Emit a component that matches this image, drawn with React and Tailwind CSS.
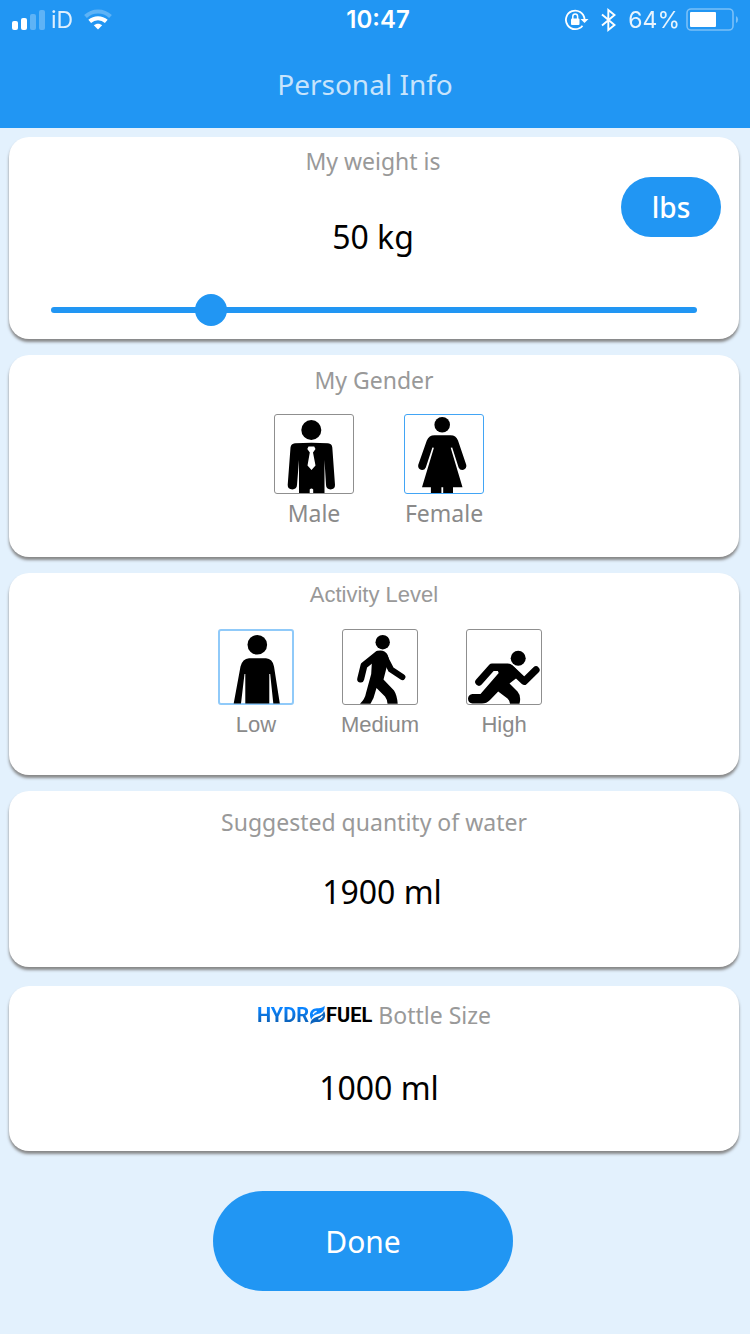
import { useState } from 'react';

function StatusBar() {
  return (
    <div className="grid h-10 grid-cols-3 items-center pr-[10px] pl-3 font-[Inter,sans-serif] text-[23px] leading-7 text-white">
      <div className="flex items-center gap-[6px]">
        <svg width="33" height="20" viewBox="0 0 33 20" fill="currentColor" aria-hidden="true">
          <rect x="0" y="11" width="6" height="9" rx="2" />
          <rect x="9" y="8" width="6" height="12" rx="2" />
          <rect x="18" y="4" width="6" height="16" rx="2" opacity=".28" />
          <rect x="27" y="0" width="6" height="20" rx="2" opacity=".28" />
        </svg>
        <span className="opacity-85">iD</span>
        <svg className="ml-1" width="30" height="22" viewBox="0 0 30 22" fill="none" stroke="currentColor" aria-hidden="true">
          <path d="M2.500 7.500 C9.500 .8 20.500 .8 27.500 7.500" strokeWidth="4" opacity=".28" />
          <path d="M6.700 12.300 C11.500 8.200 18.500 8.200 23.300 12.300" strokeWidth="4.200" />
          <path d="M15 20.500 L10.800 16.300 C13 14.200 17 14.200 19.200 16.300Z" fill="currentColor" stroke="none" />
        </svg>
      </div>
      <div className="pl-1 text-center text-2xl leading-7 font-semibold">10:47</div>
      <div className="flex items-center justify-end">
        <svg className="mr-3" width="24" height="22" viewBox="0 0 24 22" fill="none" stroke="currentColor" aria-hidden="true">
          <path d="M17.500 16.700 A9.300 9.300 0 1 1 19.500 10" strokeWidth="1.800" />
          <path d="M15.500 10 H23.500 L19.500 14Z" fill="currentColor" stroke="none" />
          <rect x="6" y="9.500" width="8.500" height="6.500" rx="1" fill="currentColor" stroke="none" />
          <path d="M7.800 10 V7.500 a2.400 2.400 0 0 1 4.800 0 V10" strokeWidth="1.500" />
        </svg>
        <svg className="mr-3" width="15" height="24" viewBox="0 0 15 24" fill="none" stroke="currentColor" strokeWidth="1.900" aria-hidden="true">
          <path d="M1 6.500 L13.500 17 L7.300 22 V2 L13.500 7 L1 17.500" />
        </svg>
        <span className="mr-[6px] opacity-90">64%</span>
        <svg width="54" height="24" viewBox="0 0 54 24" fill="currentColor" aria-hidden="true">
          <rect x="1" y="1" width="46" height="21" rx="4" fill="none" stroke="currentColor" strokeWidth="1.600" opacity=".4" />
          <rect x="4" y="4" width="26" height="15" rx="1" />
          <path d="M50 8 a4 4 0 0 1 0 7Z" opacity=".4" />
        </svg>
      </div>
    </div>
  );
}

function MaleIcon() {
  return (
    <svg viewBox="0 0 80 80" className="col-start-1 row-start-1 size-20" aria-hidden="true">
      <circle cx="37.300" cy="16" r="10" />
      <path d="M21 29.300 Q37.500 28 54 29.300 Q58 29.600 58.300 33.500 L61 71 Q61 75.400 56.500 75.400 Q52.300 75.400 52 71 L50.500 46 V79 H39.200 V75.500 Q37.500 73.500 35.700 75.500 V79 H25 V46 L23 71 Q22.700 75.400 18.300 75.400 Q13.700 75.400 13.700 71 L16.500 33.500 Q17 29.600 21 29.300Z" />
      <path d="M34.500 32.500 H40.200 L41.500 35 L39 38.500 L41.500 51.500 L37.500 56 L33.500 51.500 L35.800 38.500 L33.300 35Z" fill="#fff" />
    </svg>
  );
}

function FemaleIcon() {
  return (
    <svg viewBox="0 0 80 80" className="col-start-1 row-start-1 size-20" aria-hidden="true">
      <circle cx="38.200" cy="10.800" r="7.800" />
      <path d="M30.500 21.200 H46.500 Q52 21.200 54 26.500 L62.300 51 Q62.800 54.500 59.500 55.800 Q56 56.600 54.600 53.400 L48.200 33.500 L46.700 33.800 L58.500 73.200 H49 V79 H39.200 V73.200 H37.400 V79 H26.900 V73.200 H18 L29.900 33.800 L28.400 33.500 L21.800 53.400 Q20.400 56.600 16.900 55.800 Q13.700 54.500 14.200 51 L22.800 26.500 Q25 21.200 30.500 21.200Z" />
    </svg>
  );
}

function StandIcon() {
  return (
    <svg viewBox="0 0 76 76" className="col-start-1 row-start-1 size-19" aria-hidden="true">
      <circle cx="39.300" cy="15.700" r="9.800" />
      <path d="M31 29.200 H48 Q54.500 29.500 56 37.500 L61.800 74.500 H55.300 L52.200 45 H51.300 V74.500 H27.300 V45 H26.500 L23 74.500 H15.700 L22.500 37.500 Q24.500 29.500 31 29.200Z" />
    </svg>
  );
}

function WalkIcon() {
  return (
    <svg viewBox="0 0 76 76" className="col-start-1 row-start-1 size-19" strokeLinecap="round" strokeLinejoin="round" aria-hidden="true">
      <circle cx="40.700" cy="13.200" r="7.200" />
      <path d="M35.700 25.500 L22 36.500 L18.700 50" fill="none" stroke="#000" strokeWidth="7" />
      <path d="M42 27 L49 40.500 L60.300 48" fill="none" stroke="#000" strokeWidth="6.200" />
      <path d="M33.500 23 Q38 20.500 42.500 22.500 Q47.300 26 46.500 31 L41.500 50.500 L52 61.500 Q55 66 55.700 74.800 H45.500 Q45 70 43 67.500 L34.500 59 L31.500 69 L28.500 74.800 H18 Q23 70 24 64 L29.200 45 L30 31Z" />
    </svg>
  );
}

function RunIcon() {
  return (
    <svg viewBox="0 0 76 76" className="col-start-1 row-start-1 size-19" strokeLinecap="round" strokeLinejoin="round" aria-hidden="true">
      <circle cx="52.200" cy="29.300" r="7.500" />
      <path d="M42 38.200 H26 L12.900 53" fill="none" stroke="#000" strokeWidth="7.400" />
      <path d="M44 39 L58.300 52.300 L70 40.900" fill="none" stroke="#000" strokeWidth="7.200" />
      <path d="M29 35.200 H43 Q49 37 54.500 46 L43.500 54.500 L51.500 62.500 Q55.500 67 53.500 74.800 H44 Q43.500 71 41.500 69.500 L32.200 62.500 L24 71 Q20.500 74.500 16 74.500 H6.500 Q2 73.800 2 69.500 Q2.300 65.500 6.500 65 H14.500 L32.700 44Z" />
    </svg>
  );
}

function Card({ children, className }) {
  return (
    <section className={`rounded-[20px] bg-white shadow-[0_3px_3px_rgb(60_50_40/0.55)] ${className}`}>
      {children}
    </section>
  );
}

const heading = "text-center font-['Noto_Sans',sans-serif] text-[23px] leading-8 text-[#999]";
const amount = "text-center font-['Noto_Sans',sans-serif] text-[32px] leading-10 text-black";

function Choice({ name, label, checked, onChange, boxClass, labelClass, children }) {
  return (
    <label className={`flex cursor-pointer flex-col items-center whitespace-nowrap ${labelClass}`}>
      <span className="grid">
        <input
          type="radio"
          name={name}
          checked={checked}
          onChange={onChange}
          className={`col-start-1 row-start-1 appearance-none rounded-[3px] border border-[#8f8f8f] ${boxClass}`}
        />
        {children}
      </span>
      {label}
    </label>
  );
}

export default function App() {
  const [weight, setWeight] = useState(50);
  const [pounds, setPounds] = useState(false);
  const [gender, setGender] = useState('Female');
  const [activity, setActivity] = useState('Low');

  return (
    <div className="min-h-screen bg-[#e3f1fd] pb-10">
      <header className="bg-[#2196f3] pb-6">
        <StatusBar />
        <h1 className="pt-6 pr-5 text-center font-['Noto_Sans',sans-serif] text-[28px] leading-10 text-white/75">
          Personal Info
        </h1>
      </header>

      <main className="flex flex-col gap-4 pt-[9px] pr-[11px] pl-[9px]">
        <Card className="pt-2 pb-[13px]">
          <div className="grid grid-cols-[1fr_auto_1fr] pr-[18px]">
            <div className="col-start-2 pl-4">
              <h2 className={heading}>My weight is</h2>
              <output htmlFor="weight" className={`mt-10 block ${amount}`}>
                {pounds ? `${Math.round(weight * 2.205)} lbs` : `${weight} kg`}
              </output>
            </div>
            <button
              type="button"
              onClick={() => setPounds(!pounds)}
              className="mt-8 h-15 w-25 justify-self-end rounded-full bg-[#2196f3] font-['Noto_Sans',sans-serif] text-[28px] font-medium text-white"
            >
              {pounds ? 'kg' : 'lbs'}
            </button>
          </div>
          <div className="mt-[37px] flex px-[42px]">
            <input
              id="weight"
              type="range"
              aria-label="My weight"
              min="30"
              max="115"
              value={weight}
              onChange={(e) => setWeight(Number(e.target.value))}
              className="h-8 w-full appearance-none bg-transparent [&::-webkit-slider-runnable-track]:h-[6px] [&::-webkit-slider-runnable-track]:rounded-full [&::-webkit-slider-runnable-track]:bg-[#2196f3] [&::-webkit-slider-thumb]:mt-[-13px] [&::-webkit-slider-thumb]:size-8 [&::-webkit-slider-thumb]:appearance-none [&::-webkit-slider-thumb]:rounded-full [&::-webkit-slider-thumb]:bg-[#2196f3]"
            />
          </div>
        </Card>

        <Card className="pt-[9px] pb-[25px]">
          <h2 className={heading}>My Gender</h2>
          <div className="mt-[18px] flex justify-center gap-[50px] pl-[10px]">
            {[['Male', MaleIcon], ['Female', FemaleIcon]].map(([name, Icon]) => (
              <Choice
                key={name}
                name="gender"
                label={name}
                checked={gender === name}
                onChange={() => setGender(name)}
                boxClass="size-20 checked:border-[#42a5f5]"
                labelClass="w-20 font-['Noto_Sans',sans-serif] text-[23px] leading-[38px] text-[#8a8a8a]"
              >
                <Icon />
              </Choice>
            ))}
          </div>
        </Card>

        <Card className="pt-2 pb-[30px]">
          <h2 className="text-center font-['Liberation_Sans',sans-serif] text-[22px] leading-7 text-[#999]">
            Activity Level
          </h2>
          <div className="mt-5 flex justify-center gap-12 pl-3">
            {[['Low', StandIcon], ['Medium', WalkIcon], ['High', RunIcon]].map(([name, Icon]) => (
              <Choice
                key={name}
                name="activity"
                label={name}
                checked={activity === name}
                onChange={() => setActivity(name)}
                boxClass="size-19 checked:border-2 checked:border-[#90caf9]"
                labelClass="w-19 font-['Liberation_Sans',sans-serif] text-[22px] leading-10 text-[#8a8a8a]"
              >
                <Icon />
              </Choice>
            ))}
          </div>
        </Card>

        <Card className="pt-[15px] pb-[55px]">
          <h2 className={heading}>Suggested quantity of water</h2>
          <p className={`mt-[34px] pl-4 ${amount}`}>1900 ml</p>
        </Card>

        <Card className="mt-[3px] pt-[13px] pb-[43px]">
          <h2 className={`flex items-center justify-center ${heading}`}>
            <span className="mr-[6px] flex items-center font-[Roboto,sans-serif] text-[20px] font-bold text-black">
              <span className="bg-linear-to-b from-[#0a84ff] from-30% to-[#0b5cad] to-80% bg-clip-text text-transparent">HYDR</span>
              <svg width="17" height="20" viewBox="0 0 18 20" aria-hidden="true">
                <path d="M2.500 15 C-1.500 8 3 2 9.500 2.800 C12.500 3 15 2 16.500 .2 C17 5 14 7.600 10 8.800 C6 10 3.500 11.500 2.500 15Z" fill="#0a84ff" />
                <path d="M15.800 5.500 C19.500 12 15 18.200 8.500 17.400 C5.500 17.100 3.500 18 1.500 20 C1.500 15 5 13 8.600 11.900 C12.500 10.700 15.200 9 15.800 5.500Z" fill="#0b63bd" />
                <path d="M7.500 6.300 C6 6.600 5 7.500 4.600 8.600 M10.500 14.200 C12.300 13.800 13.300 12.800 13.800 11.600" fill="none" stroke="#fff" strokeWidth="1.500" strokeLinecap="round" />
              </svg>
              FUEL
            </span>
            Bottle Size
          </h2>
          <p className={`mt-[37px] pl-[10px] ${amount}`}>1000 ml</p>
        </Card>
      </main>

      <div className="mt-10 flex justify-center pr-6">
        <button
          type="button"
          className="h-25 w-75 rounded-full bg-[#2196f3] font-['Noto_Sans',sans-serif] text-[30px] text-white"
        >
          Done
        </button>
      </div>
    </div>
  );
}
